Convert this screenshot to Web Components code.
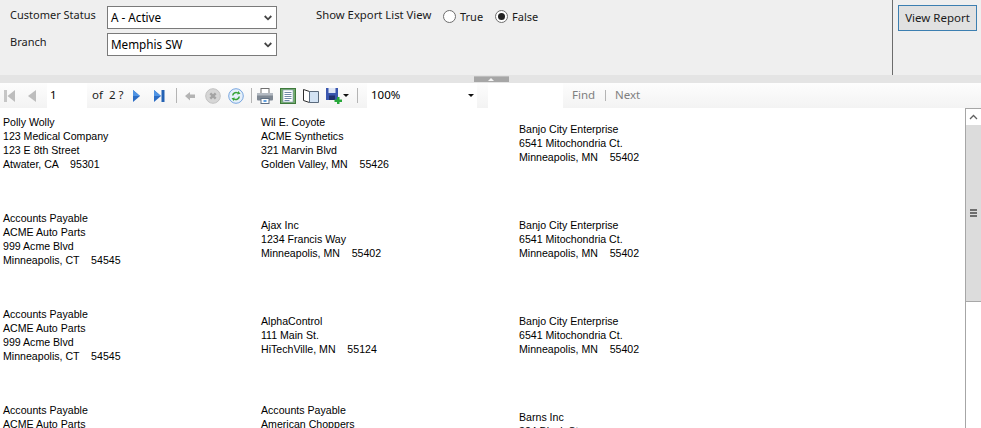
<!DOCTYPE html>
<html>
<head>
<meta charset="utf-8">
<style>
  html, body { margin: 0; height: 428px; overflow: hidden; background: #fff; }
</style>
</head>
<body>
<report-viewer></report-viewer>
<script>
const ICONS = {
    first: `<svg width="16" height="16" viewBox="0 0 16 16"><rect x="3" y="2" width="3" height="12" fill="#c6c6c6"/><path d="M14 2v12L6.500 8z" fill="#bdbdbd"/></svg>`,
    prev: `<svg width="16" height="16" viewBox="0 0 16 16"><path d="M12 2v12L4 8z" fill="#bdbdbd"/></svg>`,
    next: `<svg width="16" height="16" viewBox="0 0 16 16"><path d="M4 2v12l7-6z" fill="#2b6cc4"/><path d="M4 2v6h7z" fill="#4f94e4"/></svg>`,
    last: `<svg width="16" height="16" viewBox="0 0 16 16"><path d="M2 2v12l7-6z" fill="#2b6cc4"/><path d="M2 2v6h7z" fill="#4f94e4"/><rect x="9.500" y="2" width="3" height="12" fill="#2462b4"/></svg>`,
    back: `<svg width="16" height="16" viewBox="0 0 16 16"><path d="M3 8l5-4v2.500h5v3.500H8v2.500z" fill="#b4b4b4"/></svg>`,
    stop: `<svg width="16" height="16" viewBox="0 0 16 16"><circle cx="8" cy="8" r="7.300" fill="#d6d6d6" stroke="#c2c2c2"/><path d="M5.300 5.300l5.400 5.400m0-5.400l-5.400 5.400" stroke="#a4a4a4" stroke-width="2.400"/></svg>`,
    refresh: `<svg width="16" height="16" viewBox="0 0 16 16"><circle cx="8" cy="8" r="7.300" fill="#e6f0fb" stroke="#78a6df"/><path d="M4 7.500a4 4 0 0 1 6-3.200V2.800l2.500 3-3.500.8 .6-1.100A3 3 0 0 0 5.500 7.500z" fill="#3aa53a"/><path d="M12 8.500a4 4 0 0 1-6 3.200v1.500l-2.500-3 3.500-.8-.6 1.100a3 3 0 0 0 4.100-2z" fill="#3aa53a"/></svg>`,
    print: `<svg width="16" height="16" viewBox="0 0 16 16"><rect x="4" y=".5" width="8" height="5" fill="#fff" stroke="#6f6f6f"/><rect x="0" y="5" width="16" height="7.500" rx="1" fill="#7f8893"/><rect x="0" y="5" width="16" height="2.500" fill="#b3b9c1"/><rect x="4" y="10.500" width="8" height="5" fill="#fff" stroke="#5f6f82"/><rect x="6.500" y="12" width="3" height="2" fill="#5f9fe0"/></svg>`,
    layout: `<svg width="16" height="16" viewBox="0 0 16 16"><rect x=".5" y=".5" width="15" height="15" fill="#74ad6c" stroke="#3f7a3c"/><rect x="3" y="2" width="10" height="12" fill="#fff" stroke="#7d95b3" stroke-width=".6"/><path d="M4.500 4.500h7M4.500 6.500h7M4.500 8.500h7M4.500 10.500h7M4.500 12.500h5" stroke="#6f88a8"/></svg>`,
    pagesetup: `<svg width="16" height="16" viewBox="0 0 16 16"><path d="M.5 1.500L6.500 3.500v11L.5 12.500z" fill="#fff" stroke="#2c2c2c"/><path d="M6.500 3.500h9v11h-9z" fill="#d3e3f4" stroke="#5a6a7c"/></svg>`,
    save: `<svg width="16" height="16" viewBox="0 0 16 16"><rect x="0" y="0" width="12" height="12" fill="#3a56ae"/><rect x="2.500" y="0" width="7" height="5" fill="#dfe6f5"/><rect x="3" y="7.500" width="6" height="4.500" fill="#20306c"/><path d="M8.500 11.500h2.500V9h2.500v2.500H16V14h-2.500v2H11v-2H8.500z" fill="#27a83a"/></svg>`
};

const panelTemplate = document.createElement('template');
panelTemplate.innerHTML = `
  <style>
    :host {
        display: flex;
        height: 75px;
        background: #efefef;
        color: #1b1b1b;
        font: 11.3px "Noto Sans", sans-serif;
    }
    #params {
        flex: 1;
        display: flex;
        padding-top: 6px;
        border-right: 1px solid #6c6c6c;
    }
    #labels {
        width: 107px;
        padding: 1px 0 0 10px;
        box-sizing: border-box;
        display: grid;
        grid-template-rows: 27px 27px;
        font-size: 11px;
    }
    #selects {
        width: 170px;
        display: flex;
        flex-direction: column;
        gap: 4px;
    }
    #export {
        display: flex;
        height: 22px;
        margin-left: 39px;
        align-items: flex-start;
    }
    #title { width: 127px; padding-top: 1px; }
    .option {
        display: flex;
        align-items: center;
        gap: 4px;
        padding-top: 3px;
        width: 52px;
        font-size: 11px;
    }
    .radio {
        box-sizing: border-box;
        width: 13px;
        height: 13px;
        border: 1px solid #6e6e6e;
        border-radius: 50%;
        background: #fff;
        display: flex;
        align-items: center;
        justify-content: center;
    }
    .radio.on::before {
        content: "";
        width: 7px;
        height: 7px;
        border-radius: 50%;
        background: #222;
    }
    #action {
        width: 88px;
        padding: 5px 0 0 5px;
        box-sizing: border-box;
    }
    #view {
        display: flex;
        align-items: center;
        justify-content: center;
        box-sizing: border-box;
        width: 79px;
        height: 26px;
        padding-bottom: 2px;
        background: #e1e1e1;
        border: 1px solid #3c7fb1;
        font-size: 11.5px;
    }
  </style>
  <div id="params">
    <div id="labels"><span>Customer Status</span><span>Branch</span></div>
    <div id="selects">
      <drop-list>A - Active</drop-list>
      <drop-list>Memphis SW</drop-list>
    </div>
    <div id="export">
      <span id="title">Show Export List View</span>
      <span class="option"><span class="radio"></span>True</span>
      <span class="option"><span class="radio on"></span>False</span>
    </div>
  </div>
  <div id="action"><div id="view">View Report</div></div>
`;

class ParamPanel extends HTMLElement {
    constructor() {
        super();
        this.attachShadow({mode: 'open'})
            .appendChild(panelTemplate.content.cloneNode(true));
    }
}

const dropTemplate = document.createElement('template');
dropTemplate.innerHTML = `
  <style>
    :host {
        display: flex;
        align-items: center;
        justify-content: space-between;
        box-sizing: border-box;
        width: 170px;
        height: 23px;
        padding: 0 4px 2px 3px;
        background: #fff;
        border: 1px solid #7a7a7a;
        color: #000;
        font: 11.7px "Noto Sans", sans-serif;
    }
    svg { display: block; margin-top: 2px; }
  </style>
  <slot></slot>
  <svg width="8" height="6" viewBox="0 0 8 6"><path d="M.7 1L4 4.300 7.300 1" fill="none" stroke="#444" stroke-width="1.800"/></svg>
`;

class DropList extends HTMLElement {
    constructor() {
        super();
        this.attachShadow({mode: 'open'})
            .appendChild(dropTemplate.content.cloneNode(true));
    }
}

const splitTemplate = document.createElement('template');
splitTemplate.innerHTML = `
  <style>
    :host {
        display: flex;
        justify-content: center;
        height: 8px;
        background: #e4e4e4;
    }
    #grip {
        box-sizing: border-box;
        width: 35px;
        height: 6px;
        margin: 1px 0 0 1px;
        background: #a6a6a6;
        border-top: 1px solid #bdbdbd;
        display: flex;
        justify-content: center;
        align-items: center;
    }
    #grip::before {
        content: "";
        border: 3px solid transparent;
        border-top: 0;
        border-bottom: 3px solid #f4f4f4;
    }
  </style>
  <div id="grip"></div>
`;

class SplitBar extends HTMLElement {
    constructor() {
        super();
        this.attachShadow({mode: 'open'})
            .appendChild(splitTemplate.content.cloneNode(true));
    }
}

const toolbarTemplate = document.createElement('template');
toolbarTemplate.innerHTML = `
  <style>
    :host {
        display: flex;
        align-items: center;
        height: 25px;
        background: linear-gradient(#fdfdfd, #f3f3f3);
        color: #1b1b1b;
        font: 11.5px "Noto Sans", sans-serif;
    }
    :host > * { flex: none; }
    .ic { display: block; width: 16px; height: 16px; }
    .ic svg { display: block; }
    .sep { width: 1px; height: 15px; background: #b4b4b4; }
    .txt { margin-bottom: 2px; }
    #page {
        box-sizing: border-box;
        width: 40px;
        height: 25px;
        padding-left: 3px;
        line-height: 23px;
        background: #fff;
        color: #000;
    }
    #zoom {
        display: flex;
        align-items: center;
        justify-content: space-between;
        box-sizing: border-box;
        width: 110px;
        height: 25px;
        padding: 0 3px 2px 4px;
        background: #fff;
        color: #000;
    }
    #zoom::after {
        content: "";
        margin-top: 2px;
        border: 3px solid transparent;
        border-bottom: 0;
        border-top: 3px solid #111;
    }
    #search { width: 75px; height: 25px; background: #fff; }
    .find { color: #7f7f7f; }
  </style>
  <span class="ic" style="margin-left:1px">${ICONS.first}</span>
  <span class="ic" style="margin-left:7px">${ICONS.prev}</span>
  <span id="page" style="margin-left:7px">1</span>
  <span class="txt" style="margin-left:5px;width:17px">of</span>
  <span class="txt" style="width:20px">2 ?</span>
  <span class="ic">${ICONS.next}</span>
  <span class="ic" style="margin-left:7px">${ICONS.last}</span>
  <span class="sep" style="margin-left:8px"></span>
  <span class="ic" style="margin-left:5px">${ICONS.back}</span>
  <span class="ic" style="margin-left:7px">${ICONS.stop}</span>
  <span class="ic" style="margin-left:7px">${ICONS.refresh}</span>
  <span class="sep" style="margin-left:7px"></span>
  <span class="ic" style="margin-left:5px">${ICONS.print}</span>
  <span class="ic" style="margin-left:7px">${ICONS.layout}</span>
  <span class="ic" style="margin-left:7px">${ICONS.pagesetup}</span>
  <span class="ic" style="margin-left:7px">${ICONS.save}</span>
  <span style="margin-left:1px;border:3px solid transparent;border-bottom:0;border-top:3px solid #111"></span>
  <span class="sep" style="margin-left:8px"></span>
  <span id="zoom" style="margin-left:9px">100%</span>
  <span id="search" style="margin-left:11px"></span>
  <span class="find txt" style="margin-left:9px;width:33px">Find</span>
  <span class="sep" style="height:11px"></span>
  <span class="find txt" style="margin-left:9px">Next</span>
`;

class ReportToolbar extends HTMLElement {
    constructor() {
        super();
        this.attachShadow({mode: 'open'})
            .appendChild(toolbarTemplate.content.cloneNode(true));
    }
}

const labelTemplate = document.createElement('template');
labelTemplate.innerHTML = `
  <style>
    :host {
        display: flex;
        flex-direction: column;
        justify-content: center;
        height: 70px;
        padding-left: 3px;
        color: #000;
        font: 10.6px/14px "Liberation Sans", Arial, sans-serif;
        white-space: pre;
    }
  </style>
  <slot></slot>
`;

class MailLabel extends HTMLElement {
    constructor() {
        super();
        this.attachShadow({mode: 'open'})
            .appendChild(labelTemplate.content.cloneNode(true));
    }
}

const LABELS = [
    ['Polly Wolly', '123 Medical Company', '123 E 8th Street', 'Atwater, CA    95301'],
    ['Wil E. Coyote', 'ACME Synthetics', '321 Marvin Blvd', 'Golden Valley, MN    55426'],
    ['Banjo City Enterprise', '6541 Mitochondria Ct.', 'Minneapolis, MN    55402'],
    ['Accounts Payable', 'ACME Auto Parts', '999 Acme Blvd', 'Minneapolis, CT    54545'],
    ['Ajax Inc', '1234 Francis Way', 'Minneapolis, MN    55402'],
    ['Banjo City Enterprise', '6541 Mitochondria Ct.', 'Minneapolis, MN    55402'],
    ['Accounts Payable', 'ACME Auto Parts', '999 Acme Blvd', 'Minneapolis, CT    54545'],
    ['AlphaControl', '111 Main St.', 'HiTechVille, MN    55124'],
    ['Banjo City Enterprise', '6541 Mitochondria Ct.', 'Minneapolis, MN    55402'],
    ['Accounts Payable', 'ACME Auto Parts', '999 Acme Blvd', 'Minneapolis, CT    54545'],
    ['Accounts Payable', 'American Choppers', '123 Main St', 'Minneapolis, MN    55402'],
    ['Barns Inc', '324 Black St', 'Minneapolis, MN    55402']
];

const reportTemplate = document.createElement('template');
reportTemplate.innerHTML = `
  <style>
    :host {
        display: flex;
        height: 320px;
        overflow: hidden;
        background: #fff;
    }
    #sheet {
        flex: 1;
        display: grid;
        grid-template-columns: repeat(3, 258px);
        grid-auto-rows: 70px;
        row-gap: 26px;
        align-content: start;
    }
    #bar {
        box-sizing: border-box;
        width: 16px;
        display: flex;
        flex-direction: column;
        background: #fff;
        border-left: 1px solid #a6a6a6;
    }
    #up {
        height: 17px;
        flex: none;
        box-sizing: border-box;
        display: flex;
        align-items: center;
        justify-content: center;
        border-top: 1px solid #a6a6a6;
    }
    #thumb {
        height: 177px;
        flex: none;
        box-sizing: border-box;
        background: #dcdcdc;
        border-bottom: 1px solid #a8a8a8;
        display: flex;
        align-items: center;
        justify-content: center;
    }
    #grip {
        width: 7px;
        height: 8px;
        background: repeating-linear-gradient(#6e6e6e 0 2px, #dcdcdc 2px 3px);
    }
  </style>
  <div id="sheet"></div>
  <div id="bar">
    <div id="up"><svg width="9" height="6" viewBox="0 0 9 6"><path d="M1 5l3.500-3.500L8 5" fill="none" stroke="#606060" stroke-width="1.300"/></svg></div>
    <div id="thumb"><div id="grip"></div></div>
  </div>
`;

class ReportSheet extends HTMLElement {
    constructor() {
        super();
        this.attachShadow({mode: 'open'})
            .appendChild(reportTemplate.content.cloneNode(true));
    }

    connectedCallback() {
        const sheet = this.shadowRoot.getElementById('sheet');
        LABELS.forEach(lines => {
            const label = document.createElement('mail-label');
            label.textContent = lines.join('\n');
            sheet.appendChild(label);
        });
    }
}

const viewerTemplate = document.createElement('template');
viewerTemplate.innerHTML = `
  <style>
    :host { display: block; width: 981px; height: 428px; overflow: hidden; }
  </style>
  <param-panel></param-panel>
  <split-bar></split-bar>
  <report-toolbar></report-toolbar>
  <report-sheet></report-sheet>
`;

class ReportViewer extends HTMLElement {
    constructor() {
        super();
        this.attachShadow({mode: 'open'})
            .appendChild(viewerTemplate.content.cloneNode(true));
    }
}

customElements.define('drop-list', DropList);
customElements.define('param-panel', ParamPanel);
customElements.define('split-bar', SplitBar);
customElements.define('report-toolbar', ReportToolbar);
customElements.define('mail-label', MailLabel);
customElements.define('report-sheet', ReportSheet);
customElements.define('report-viewer', ReportViewer);
</script>
</body>
</html>
